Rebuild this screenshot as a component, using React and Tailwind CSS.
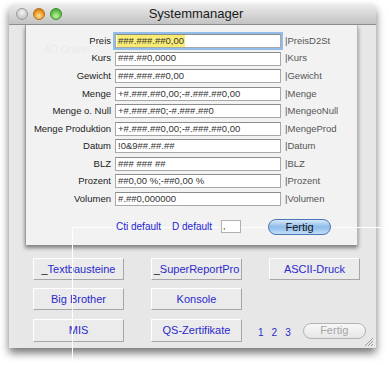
import React from "react";

const rows = [
  ["Preis", "###.###.##0,00", "|PreisD2St"],
  ["Kurs", "###.##0,0000", "|Kurs"],
  ["Gewicht", "###.###.##0,00", "|Gewicht"],
  ["Menge", "+#.###.##0,00;-#.###.##0,00", "|Menge"],
  ["Menge o. Null", "+#.###.##0;-#.###.##0", "|MengeoNull"],
  ["Menge Produktion", "+#.###.##0,00;-#.###.##0,00", "|MengeProd"],
  ["Datum", "!0&9##.##.##", "|Datum"],
  ["BLZ", "### ### ##", "|BLZ"],
  ["Prozent", "##0,00 %;-##0,00 %", "|Prozent"],
  ["Volumen", "#.##0,000000", "|Volumen"],
];

function Btn({ children, w = "w-[91px]", h = "h-[22px]" }) {
  return (
    <div
      className={`${w} ${h} flex items-center justify-center bg-[#ebebeb] border border-t-white border-l-white border-r-[#a6a6a6] border-b-[#a6a6a6] text-[11px] text-[#2a2acb] whitespace-nowrap`}
    >
      {children}
    </div>
  );
}

export default function App() {
  return (
    <div className="relative w-[389px] h-[365px] bg-white overflow-hidden font-['Liberation_Sans',Arial,sans-serif]">
      <div className="ml-[9px] mt-[4px] w-[367px] h-[344px] rounded-t-[5px] bg-[#e7e7e7] shadow-[0_5px_9px_rgba(0,0,0,0.55)] flex flex-col">
        {/* title bar */}
        <div className="h-[21px] rounded-t-[5px] bg-linear-to-b from-[#ececec] to-[#c3c3c3] border-b border-[#8e8e8e] grid grid-cols-[1fr_auto_1fr] items-center">
          <div className="flex items-center gap-[5px] pl-[7px]">
            <div className="w-[12px] h-[12px] rounded-full border border-[#9a9a9a] bg-[radial-gradient(circle_at_50%_35%,#f4f4f4,#b4b4b4)]" />
            <div className="w-[12px] h-[12px] rounded-full border border-[#b0701a] bg-[radial-gradient(circle_at_50%_70%,#ffe09a,#e8921c_60%,#c0641a)]" />
            <div className="w-[12px] h-[12px] rounded-full border border-[#3e8a30] bg-[radial-gradient(circle_at_50%_70%,#c8f4a8,#5cbf44_60%,#3b962e)]" />
          </div>
          <div className="text-[13px] text-[#1a1a1a] pl-[7px]">Systemmanager</div>
          <div />
        </div>

        {/* sheet */}
        <div className="relative ml-[16px] w-[333px] h-[220px] bg-[#f2f2f2] border-l border-[#9c9c9c] border-r border-r-[#b8b8b8] shadow-[0_3px_4px_rgba(0,0,0,0.45)] pt-[9px] flex flex-col">
          <div className="absolute left-[18px] top-[17px] text-[10px] text-[#eaeaea]">AD Online</div>

          <div className="relative flex flex-col gap-[3.55px]">
            {rows.map(([label, val, name], i) => (
              <div key={label} className="flex items-center h-[14px]">
                <div className="w-[85px] text-right text-[9.5px] text-[#222] whitespace-nowrap">{label}</div>
                <div
                  className={`ml-[4px] w-[166px] h-[14px] bg-white border border-[#a8a8a8] border-t-[#8c8c8c] flex items-center px-[1px] text-[9.5px] text-[#333] whitespace-nowrap overflow-hidden ${
                    i === 0 ? "shadow-[0_0_0_2px_#93bde9] border-[#6d94c4]" : ""
                  }`}
                >
                  {i === 0 ? (
                    <span className="bg-[#f9ec74] h-full flex items-center px-[1px]">{val}</span>
                  ) : (
                    <span className="pl-[1px]">{val}</span>
                  )}
                </div>
                <div className="ml-[4px] text-[9.5px] text-[#555] whitespace-nowrap">{name}</div>
              </div>
            ))}
          </div>

          <div className="flex items-center h-[16px] mt-[13px] pl-[90px]">
            <span className="relative z-10 text-[10px] text-[#1d1dd4]">Cti default</span>
            <span className="relative z-10 ml-[11px] text-[10px] text-[#1d1dd4]">D default</span>
            <div className="relative z-10 ml-[9px] w-[20px] h-[13px] bg-white border border-[#b0b0b0] text-[9px] leading-[10px] pl-[1px] text-[#333]">,</div>
            <div className="relative z-10 ml-[27px] w-[63px] h-[16px] rounded-full border border-[#4a77b4] bg-linear-to-b from-[#d6e8fa] via-[#8dbbe9] to-[#c2defa] flex items-center justify-center text-[11px] text-[#111]">
              Fertig
            </div>
          </div>
        </div>

        {/* buttons */}
        <div className="flex flex-col gap-[8px] mt-[13px] ml-[24px]">
          <div className="flex gap-[27px]">
            <Btn>
              <span className="text-[#111]">_</span>Textbausteine
            </Btn>
            <Btn>
              <span className="text-[#111]">_</span>SuperReportPro
            </Btn>
            <Btn>ASCII-Druck</Btn>
          </div>
          <div className="flex gap-[27px]">
            <Btn>Big Brother</Btn>
            <Btn>Konsole</Btn>
          </div>
          <div className="flex items-center mt-[1px]">
            <Btn h="h-[23px]">MIS</Btn>
            <div className="ml-[27px]">
              <Btn h="h-[23px]">QS-Zertifikate</Btn>
            </div>
            <div className="ml-[16px] flex gap-[8px] text-[10px] text-[#2a2acb] pt-[4px]">
              <span>1</span>
              <span>2</span>
              <span>3</span>
            </div>
            <div className="ml-[12px] w-[63px] h-[16px] rounded-full border border-[#b4b4b4] bg-linear-to-b from-[#f8f8f8] to-[#e6e6e6] flex items-center justify-center text-[11px] text-[#a5a5a5]">
              Fertig
            </div>
          </div>
        </div>
      </div>

      {/* resize grip */}
      <svg className="absolute left-[364px] top-[337px]" width="10" height="10" viewBox="0 0 10 10">
        <path d="M1 9 L9 1 M4 9 L9 4 M7 9 L9 7" stroke="#9a9a9a" strokeWidth="1" />
      </svg>

      {/* white guide lines */}
      <div className="absolute left-[72px] top-[227px] w-[317px] h-px bg-white z-[5]" />
      <div className="absolute left-[72px] top-[227px] w-px h-[135px] bg-white z-20" />
    </div>
  );
}
